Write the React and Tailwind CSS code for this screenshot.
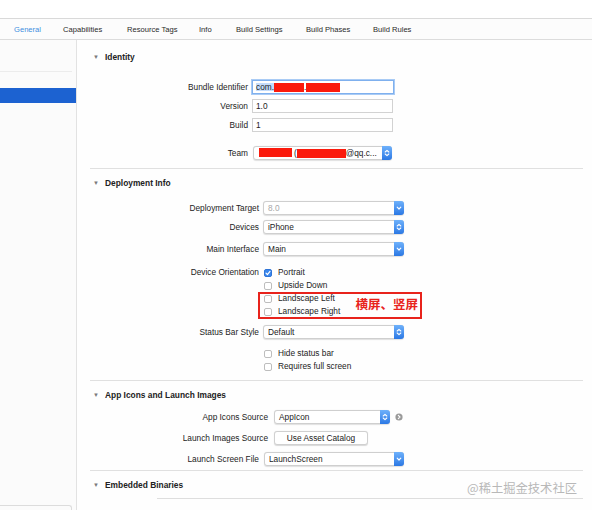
import React from 'react'

const tabs = [
  { label: 'General', w: 'w-[49px]', active: true },
  { label: 'Capabilities', w: 'w-[64px]' },
  { label: 'Resource Tags', w: 'w-[72px]' },
  { label: 'Info', w: 'w-[37px]' },
  { label: 'Build Settings', w: 'w-[70px]' },
  { label: 'Build Phases', w: 'w-[67px]' },
  { label: 'Build Rules', w: 'w-[50px]' },
]

function Chevron({ kind }) {
  if (kind === 'updown') {
    return (
      <svg width="6" height="8" viewBox="0 0 6 8" fill="none" stroke="white" strokeWidth="1.1" strokeLinecap="round" strokeLinejoin="round">
        <path d="M1.2 3 L3 1.3 L4.8 3" />
        <path d="M1.2 5 L3 6.7 L4.8 5" />
      </svg>
    )
  }
  return (
    <svg width="6" height="6" viewBox="0 0 6 6" fill="none" stroke="white" strokeWidth="1.2" strokeLinecap="round" strokeLinejoin="round">
      <path d="M1.2 2.2 L3 4 L4.8 2.2" />
    </svg>
  )
}

function Popup({ w, kind = 'down', children, muted }) {
  return (
    <div className={`${w} h-[14px] flex items-stretch bg-white border border-[#cfcfcf] rounded-[3px] shadow-[0_0.5px_1px_rgba(0,0,0,0.12)]`}>
      <div className={`flex-1 flex items-center pl-[4px] overflow-hidden whitespace-nowrap ${muted ? 'text-[#a8a8a8]' : 'text-[#222]'}`}>
        {children}
      </div>
      <div className="w-[10px] -my-px -mr-px rounded-r-[3px] bg-linear-to-b from-[#6eb1fb] to-[#2b78e4] flex items-center justify-center">
        <Chevron kind={kind} />
      </div>
    </div>
  )
}

function Field({ w, children, focus }) {
  return (
    <div className={`${w} h-[14px] flex items-center pl-[3px] bg-white text-[#222] ${focus ? 'border border-[#7fb0ee] ring-1 ring-[#a9cbf5]' : 'border border-[#d2d2d2]'}`}>
      {children}
    </div>
  )
}

function Check({ checked }) {
  if (checked) {
    return (
      <div className="w-[8px] h-[8px] rounded-[2px] bg-[#3a87ee] border border-[#2f74d6] flex items-center justify-center">
        <svg width="6" height="6" viewBox="0 0 6 6" fill="none" stroke="white" strokeWidth="1.2" strokeLinecap="round" strokeLinejoin="round">
          <path d="M1 3.2 L2.4 4.6 L5 1.4" />
        </svg>
      </div>
    )
  }
  return <div className="w-[8px] h-[8px] rounded-[2px] bg-white border border-[#bdbdbd]" />
}

function Row({ label, lw, gap = 'gap-[4px]', className = '', children }) {
  return (
    <div className={`flex items-center h-[14px] ${gap} ${className}`}>
      <div className={`${lw} text-right text-[#232323] whitespace-nowrap`}>{label}</div>
      {children}
    </div>
  )
}

function CheckRow({ label, text, checked }) {
  return (
    <div className="flex items-center h-[13px] gap-[5px]">
      <div className="w-[182px] text-right text-[#232323] whitespace-nowrap">{label}</div>
      <Check checked={checked} />
      <span className="text-[#232323] ml-[1px]">{text}</span>
    </div>
  )
}

function Header({ title }) {
  return (
    <div className="flex items-center h-[10px] pl-[16px]">
      <span className="text-[6px] text-[#7a7a7a] w-[12px]">▼</span>
      <span className="font-bold text-[#222] text-[8.4px]">{title}</span>
    </div>
  )
}

const Red = ({ w }) => <span className={`${w} h-[9px] bg-[#fb1a0c] inline-block`} />

export default function App() {
  return (
    <div className="w-[592px] h-[510px] bg-white overflow-hidden relative font-['Liberation_Sans',sans-serif] text-[8.3px] leading-none">
      <div className="h-[19px] border-b border-[#d9d9d9]" />

      {/* tabs */}
      <div className="h-[21px] border-b border-[#dcdcdc] bg-[#fcfcfc] flex items-center pl-[14px] pt-[1px] text-[7.6px]">
        {tabs.map(t => (
          <div key={t.label} className={`${t.w} whitespace-nowrap ${t.active ? 'text-[#3d8ee0]' : 'text-[#2a2a2a]'}`}>
            {t.label}
          </div>
        ))}
      </div>

      <div className="flex h-[470px]">
        {/* sidebar */}
        <div className="w-[77px] border-r border-[#e2e2e2] bg-[#fbfbfb] flex flex-col">
          <div className="h-[32px] border-b border-[#ececec] mr-[4px]" />
          <div className="mt-[16px] h-[15px] bg-[#1c62d1]" />
          <div className="mt-auto h-[5px] w-[72px] border-t border-r border-[#dcdcdc] rounded-tr-[3px]" />
        </div>

        {/* main */}
        <div className="flex-1 bg-[#fefefe]">
          {/* Identity */}
          <div className="pt-[12px] pb-[8px]">
            <Header title="Identity" />
            <Row label="Bundle Identifier" lw="w-[171px]" className="mt-[18px]">
              <Field w="w-[142px]" focus>
                <span className="bg-[#c4dcfb]">com.</span>
                <Red w="w-[30px]" />
                <span>.</span>
                <Red w="w-[34px]" />
              </Field>
            </Row>
            <Row label="Version" lw="w-[171px]" className="mt-[5px]">
              <Field w="w-[141px]">1.0</Field>
            </Row>
            <Row label="Build" lw="w-[171px]" className="mt-[5px]">
              <Field w="w-[141px]">1</Field>
            </Row>
            <Row label="Team" lw="w-[171px]" gap="gap-[5px]" className="mt-[14px]">
              <Popup w="w-[139px]" kind="updown">
                <span className="ml-[1px]"><Red w="w-[33px]" /></span>
                <span className="ml-[2px]">(</span>
                <Red w="w-[49px]" />
                <span>@qq.c...</span>
              </Popup>
            </Row>
          </div>

          {/* Deployment Info */}
          <div className="ml-[13px] mr-[9px] border-t border-[#e0e0e0]" />
          <div className="pt-[9px] pb-[7px]">
            <Header title="Deployment Info" />
            <Row label="Deployment Target" lw="w-[182px]" className="mt-[13px]">
              <Popup w="w-[141px]" muted>8.0</Popup>
            </Row>
            <Row label="Devices" lw="w-[182px]" className="mt-[5px]">
              <Popup w="w-[141px]" kind="updown">iPhone</Popup>
            </Row>
            <Row label="Main Interface" lw="w-[182px]" className="mt-[8px]">
              <Popup w="w-[141px]">Main</Popup>
            </Row>
            <div className="mt-[10px]">
              <CheckRow label="Device Orientation" text="Portrait" checked />
              <CheckRow text="Upside Down" />
              <div className="relative">
                <CheckRow text="Landscape Left" />
                <CheckRow text="Landscape Right" />
                <div className="absolute left-[181px] top-0 w-[164px] h-[27px] border-2 border-[#e8231c] flex items-center justify-end pr-[2px] pb-[3px]">
                  <span className="text-[#e8231c] font-bold text-[12.5px] font-['Noto_Sans_CJK_SC',sans-serif]">横屏、竖屏</span>
                </div>
              </div>
            </div>
            <Row label="Status Bar Style" lw="w-[182px]" className="mt-[7px]">
              <Popup w="w-[141px]" kind="updown">Default</Popup>
            </Row>
            <div className="mt-[8px]">
              <CheckRow text="Hide status bar" />
              <CheckRow text="Requires full screen" />
            </div>
          </div>

          {/* App Icons */}
          <div className="ml-[13px] mr-[9px] border-t border-[#e0e0e0]" />
          <div className="pt-[9px] pb-[4px]">
            <Header title="App Icons and Launch Images" />
            <Row label="App Icons Source" lw="w-[191px]" gap="gap-[6px]" className="mt-[10px]">
              <Popup w="w-[116px]" kind="updown">AppIcon</Popup>
              <svg width="8" height="8" viewBox="0 0 8 8" className="ml-[-1px]">
                <circle cx="4" cy="4" r="3.6" fill="#9a9a9a" />
                <path d="M3.3 2.3 L5 4 L3.3 5.7" fill="none" stroke="white" strokeWidth="1.1" strokeLinecap="round" strokeLinejoin="round" />
              </svg>
            </Row>
            <Row label="Launch Images Source" lw="w-[191px]" gap="gap-[6px]" className="mt-[7px]">
              <div className="w-[94px] h-[14px] bg-white border border-[#d0d0d0] rounded-[3px] shadow-[0_0.5px_1px_rgba(0,0,0,0.15)] flex items-center justify-center text-[#222]">
                Use Asset Catalog
              </div>
            </Row>
            <Row label="Launch Screen File" lw="w-[182px]" gap="gap-[5px]" className="mt-[7px]">
              <Popup w="w-[140px]">LaunchScreen</Popup>
            </Row>
          </div>

          {/* Embedded */}
          <div className="ml-[13px] mr-[9px] border-t border-[#e0e0e0]" />
          <div className="pt-[9px]">
            <Header title="Embedded Binaries" />
            <div className="mt-[8px] ml-[80px] mr-[9px] border-t border-[#dedede]" />
          </div>
        </div>
      </div>

      <div className="absolute left-[467px] top-[482px] text-[12.3px] text-[#b8b8b8] font-['Noto_Sans_CJK_SC',sans-serif] whitespace-nowrap">
        @稀土掘金技术社区
      </div>
    </div>
  )
}
